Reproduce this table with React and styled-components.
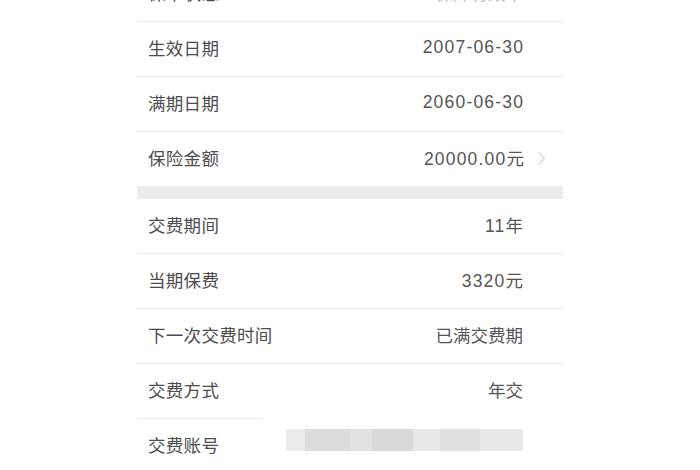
import React from 'react';
import styled, { createGlobalStyle } from 'styled-components';

const Global = createGlobalStyle`
  body {
    margin: 0;
    background: #fff;
    font-family: "Noto Sans CJK SC", "Noto Sans", sans-serif;
  }
`;

const Page = styled.div`
  width: 700px;
  height: 470px;
  overflow: hidden;
  background: #fff;
`;

const List = styled.div`
  width: 426px;
  margin: -33px 0 0 137px;
  display: flex;
  flex-direction: column;
`;

const Row = styled.div`
  position: relative;
  height: 55px;
  display: flex;
  align-items: center;
  justify-content: space-between;
  padding: 0 40px 5px 11px;
  box-sizing: border-box;

  &::after {
    content: '';
    position: absolute;
    left: 0;
    bottom: 0;
    height: 1px;
    width: ${p => p.$line || '100%'};
    background: ${p => (p.$noLine ? 'transparent' : '#ececec')};
  }
`;

const Label = styled.span`
  font-size: 17.5px;
  color: #4d4d4d;
  letter-spacing: 0.3px;
`;

const Value = styled.span`
  display: flex;
  align-items: center;
  font-family: "Liberation Sans", "Noto Sans CJK SC", sans-serif;
  font-size: 17.5px;
  letter-spacing: ${p => (p.$num ? '1.2px' : '0')};
  margin-right: ${p => (p.$num ? '-1.2px' : '0')};
  color: ${p => (p.$faint ? '#b8b8b8' : '#555')};
`;

const Chevron = styled.svg`
  width: 9px;
  height: 15px;
  margin: 2px -22px 0 12px;
`;

const Band = styled.div`
  height: 12px;
  background: #ececec;
`;

const Masked = styled.div`
  display: flex;
  height: 22px;
  width: 237px;
  margin-bottom: 9px;
`;

const Block = styled.div`
  flex: ${p => p.$w};
  background: ${p => p.$c};
`;

const blur = [
  [19, '#ececec'], [45, '#dcdcdc'], [22, '#e2e2e2'], [41, '#d9d9d9'],
  [27, '#e8e8e8'], [40, '#dfdfdf'], [43, '#e9e9e9'],
];

function Item({ label, value, chevron, faint, line }) {
  return (
    <Row $line={line}>
      <Label>{label}</Label>
      <Value $faint={faint} $num={/\d/.test(value)}>
        {value}
        {chevron && (
          <Chevron viewBox="0 0 9 15">
            <path d="M1.5 1.5 L7.5 7.5 L1.5 13.5" fill="none" stroke="#d6d6d6" strokeWidth="1.4" />
          </Chevron>
        )}
      </Value>
    </Row>
  );
}

export default function App() {
  return (
    <Page>
      <Global />
      <List>
        <Item label="保单状态" value="保障有效中" faint />
        <Item label="生效日期" value="2007-06-30" />
        <Item label="满期日期" value="2060-06-30" />
        <Item label="保险金额" value="20000.00元" chevron />
        <Band />
        <Item label="交费期间" value="11年" />
        <Item label="当期保费" value="3320元" />
        <Item label="下一次交费时间" value="已满交费期" />
        <Item label="交费方式" value="年交" line="126px" />
        <Row $noLine>
          <Label>交费账号</Label>
          <Masked>
            {blur.map(([w, c], i) => (
              <Block key={i} $w={w} $c={c} />
            ))}
          </Masked>
        </Row>
      </List>
    </Page>
  );
}
